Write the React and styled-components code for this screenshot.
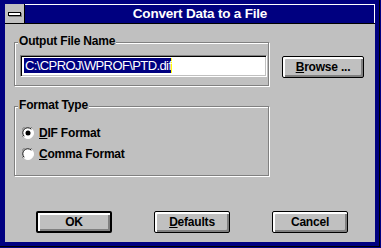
import React from 'react'
import styled, { createGlobalStyle, css } from 'styled-components'

const GlobalStyle = createGlobalStyle`
  html, body {
    margin: 0;
    padding: 0;
    background: #000080;
  }
  body {
    font-family: "Liberation Sans", Arial, sans-serif;
    color: #000;
  }
`

const Frame = styled.div`
  width: 381px;
  height: 248px;
  box-sizing: border-box;
  background: #000080;
  padding: 4px 6px 6px 5px;
  display: flex;
  flex-direction: column;
  box-shadow: inset -1px -1px 0 #000080, inset -2px -2px 0 #000;
`

const TitleBar = styled.div`
  height: 19px;
  display: flex;
  border-bottom: 1px solid #000;
  box-shadow: inset 0 1px 0 #fff, inset -1px 0 0 #fff;
`

const SysMenu = styled.div`
  width: 19px;
  flex: none;
  background: #c0c0c0;
  border-right: 1px solid #000;
  display: flex;
  align-items: center;
  justify-content: center;
`

const SysBar = styled.div`
  width: 11px;
  height: 2px;
  background: #fff;
  border: 1px solid #000;
  box-shadow: 1px 1px 0 #808080;
  margin-top: 1px;
`

const Title = styled.div`
  flex: 1;
  display: flex;
  align-items: center;
  justify-content: center;
  color: #fff;
  font-weight: bold;
  font-size: 13.5px;
  letter-spacing: -0.2px;
`

const Client = styled.div`
  flex: 1;
  background: #c0c0c0;
  padding: 18px 0 0 9px;
`

const Row = styled.div`
  display: flex;
  align-items: flex-start;
`

const Group = styled.div`
  position: relative;
  width: 255px;
  height: ${p => p.$height}px;
  box-sizing: border-box;
  border: 1px solid #808080;
  box-shadow: inset 1px 1px 0 #fff, 1px 1px 0 #fff;
  margin-top: ${p => p.$top || 0}px;
  padding: ${p => p.$pad};
`

const Legend = styled.span`
  position: absolute;
  top: -9px;
  left: 3px;
  padding: 0 1px;
  background: #c0c0c0;
  font-size: 12px;
  font-weight: bold;
  line-height: 14px;
  letter-spacing: -0.2px;
`

const TextField = styled.div`
  width: 247px;
  height: 22px;
  box-sizing: border-box;
  background: #fff;
  border: 1px solid;
  border-color: #808080 #fff #fff #808080;
  box-shadow: inset 1px 1px 0 #000, inset -1px -1px 0 #c0c0c0;
  padding: 2px 0 0 3px;
  display: flex;
  align-items: flex-start;
`

const Selected = styled.span`
  background: #000080;
  color: #fff;
  font-size: 13px;
  line-height: 15px;
  letter-spacing: -0.6px;
  padding-left: 1px;
  border-right: 1px solid #ffff00;
`

const buttonBase = css`
  height: 22px;
  box-sizing: border-box;
  background: #c0c0c0;
  border: 1px solid #000;
  border-radius: 2px;
  box-shadow: inset 1px 1px 0 #fff, inset 2px 2px 0 #fff, inset -1px -1px 0 #808080, inset -2px -2px 0 #808080;
  font-family: "Liberation Sans", Arial, sans-serif;
  font-weight: bold;
  font-size: 12px;
  letter-spacing: -0.2px;
  color: #000;
  padding: 0 0 1px;
`

const Button = styled.button`
  ${buttonBase};
  width: ${p => p.$width || 76}px;
  margin-left: ${p => p.$left || 0}px;
  margin-top: ${p => p.$topGap || 0}px;
  ${p => p.$default && css`
    border-width: 2px;
  `}
`

const RadioRow = styled.div`
  display: flex;
  align-items: center;
  gap: 5px;
  height: 21px;
  font-size: 12px;
  font-weight: bold;
  letter-spacing: -0.2px;
`

const ButtonRow = styled.div`
  display: flex;
  gap: 42px;
  margin: 35px 0 0 22px;
`

function Radio({ checked }) {
  return (
    <svg width="12" height="12" viewBox="0 0 12 12">
      <circle cx="6" cy="6" r="5.5" fill="#fff" stroke="#fff" />
      <path d="M1.1 10.2 A5.5 5.5 0 0 1 10.2 1.1" fill="none" stroke="#808080" strokeWidth="1" />
      <path d="M2.2 9.3 A4.4 4.4 0 0 1 9.3 2.2" fill="none" stroke="#000" strokeWidth="1" />
      {checked && <circle cx="6" cy="6" r="2.5" fill="#000" />}
    </svg>
  )
}

export default function App() {
  return (
    <>
      <GlobalStyle />
      <Frame>
        <TitleBar>
          <SysMenu><SysBar /></SysMenu>
          <Title>Convert Data to a File</Title>
        </TitleBar>
        <Client>
          <Row>
            <Group $height={44} $pad="12px 0 0 5px">
              <Legend>Output File Name</Legend>
              <TextField>
                <Selected>C:\CPROJ\WPROF\PTD.dif</Selected>
              </TextField>
            </Group>
            <Button $width={82} $left={13} $topGap={14}><u>B</u>rowse ...</Button>
          </Row>
          <Group $height={70} $top={20} $pad="15px 0 0 7px">
            <Legend>Format Type</Legend>
            <RadioRow><Radio checked /><span><u>D</u>IF Format</span></RadioRow>
            <RadioRow><Radio /><span><u>C</u>omma Format</span></RadioRow>
          </Group>
          <ButtonRow>
            <Button $default>OK</Button>
            <Button><u>D</u>efaults</Button>
            <Button>Cancel</Button>
          </ButtonRow>
        </Client>
      </Frame>
    </>
  )
}
